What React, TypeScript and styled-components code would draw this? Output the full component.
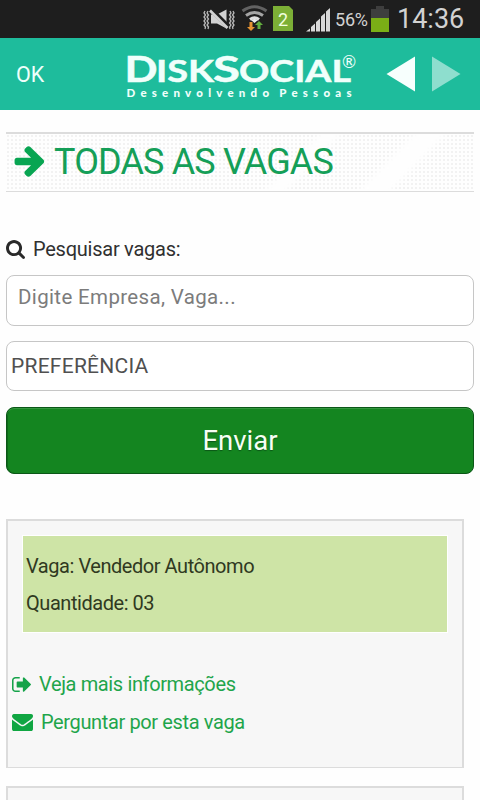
import React from 'react'
import styled, { createGlobalStyle } from "styled-components";

const GlobalStyle = createGlobalStyle`
    * {
        box-sizing: border-box;
    }

    body {
        margin: 0;
        background: #fefefe;
        font-family: Roboto, "Liberation Sans", sans-serif;
        overflow: hidden;
    }
`

const Screen = styled.div`
    width: 480px;
    height: 800px;
    overflow: hidden;
    background: #fefefe;
`

const StatusBar = styled.div`
    display: flex;
    align-items: center;
    height: 38px;
    padding-left: 203px;
    background: #1e1e1e;
    color: #d2d2d2;
`

const Percent = styled.span`
    width: 36px;
    margin-left: 5px;
    font-size: 18px;
    letter-spacing: -0.2px;
    white-space: nowrap;
`

const Clock = styled.span`
    margin-left: 7px;
    font-size: 27px;
    line-height: 38px;
    letter-spacing: 0;
`

const Header = styled.header`
    display: flex;
    align-items: center;
    height: 72px;
    padding-left: 16px;
    background: #1ebc9c;
    color: #effffb;
`

const OkLabel = styled.span`
    width: 108px;
    font-size: 21.5px;
`

const Arrows = styled.svg`
    margin-left: 26px;
`

const Content = styled.main`
    padding: 22px 6px 0;
`

const TitleBar = styled.div`
    display: flex;
    align-items: center;
    height: 60px;
    padding: 0 0 2px 6px;
    border-top: 2px solid #dcdcdc;
    border-bottom: 1px solid #dcdcdc;
    background:
        linear-gradient(134deg, transparent 59%, #fefefe 61%, #fefefe 63%, transparent 65%),
        linear-gradient(134deg, transparent 77%, #fefefe 79%, #fefefe 83%, transparent 85%),
        radial-gradient(circle, #f2f2f2 0.8px, transparent 1.3px) 0 0 / 4px 4px,
        #fefefe;
`

const Title = styled.h1`
    margin: 0 0 0 6px;
    font-size: 36px;
    font-weight: 400;
    line-height: 56px;
    letter-spacing: -0.85px;
    color: #159f58;
`

const SearchLabel = styled.label`
    display: flex;
    align-items: center;
    height: 28px;
    margin-top: 43px;
    gap: 8px;
    font-size: 20px;
    letter-spacing: -0.25px;
    color: #303030;
`

const Field = styled.div<{ $select?: boolean }>`
    height: ${(props) => (props.$select ? "50px" : "51px")};
    margin-top: ${(props) => (props.$select ? "15px" : "12px")};
    padding-left: ${(props) => (props.$select ? "4px" : "11px")};
    border: 1px solid #c6c6c6;
    border-radius: 8px;
    background: #fff;
    color: ${(props) => (props.$select ? "#505050" : "#7c7c7c")};
    font-size: ${(props) => (props.$select ? "21px" : "20.5px")};
    line-height: ${(props) => (props.$select ? "49px" : "43px")};
    letter-spacing: ${(props) => (props.$select ? "0.25px" : "0.35px")};
`

const SubmitButton = styled.button`
    display: block;
    width: 100%;
    height: 67px;
    margin-top: 16px;
    padding: 0;
    border: 1px solid #0b5717;
    border-radius: 8px;
    background: #148520;
    box-shadow: inset 0 1px 0 #35963f, inset 1px 0 0 #0e6a1a;
    color: #f6fff4;
    font-family: inherit;
    font-size: 27.5px;
    text-shadow: 0 1px 1px #0b5717;
`

const Card = styled.section<{ $first?: boolean }>`
    width: 458px;
    height: 249px;
    margin-top: ${(props) => (props.$first ? "45px" : "18px")};
    padding-top: 14px;
    border: 2px solid #dcdcdc;
    border-bottom-width: 1px;
    background: #f7f7f7;
`

const Summary = styled.div`
    width: 426px;
    height: 98px;
    margin-left: 14px;
    padding: 12px 3px 0;
    border: 1px solid #fff;
    background: #cee4a6;
    font-size: 20px;
    line-height: 37px;
    letter-spacing: -0.45px;
    color: #30391f;
`

const Links = styled.nav`
    margin-top: 32px;
    padding-left: 4px;
`

const JobLink = styled.a`
    display: flex;
    align-items: center;
    height: 38px;
    gap: 8px;
    font-size: 20px;
    letter-spacing: -0.37px;
    color: #1fa54b;
`

const ARROW_RIGHT = "M1600 960q0 54-37 91l-651 651q-39 37-91 37-51 0-90-37l-75-75q-38-38-38-91t38-91l293-293h-704q-52 0-84.500-37.500t-32.500-90.500v-128q0-53 32.500-90.500t84.500-37.500h704l-293-294q-38-36-38-90t38-90l75-75q38-38 90-38 53 0 91 38l651 651q37 35 37 90z"
const SEARCH = "M1216 832q0-185-131.500-316.500t-316.500-131.500-316.500 131.500-131.500 316.500 131.500 316.500 316.500 131.500 316.500-131.500 131.500-316.500zm512 832q0 52-38 90t-90 38q-54 0-90-38l-343-342q-179 124-399 124-143 0-273.500-55.500t-225-150-150-225-55.500-273.500 55.500-273.500 150-225 225-150 273.500-55.500 273.500 55.500 225 150 150 225 55.500 273.500q0 220-124 399l343 343q37 37 37 90z"
const SIGN_OUT = "M704 1440q0 4 1 20t.5 26.500-3 23.500-10 19.500-20.500 6.500h-320q-119 0-203.500-84.500t-84.500-203.500v-704q0-119 84.500-203.500t203.500-84.500h320q13 0 22.500 9.500t9.500 22.500q0 4 1 20t.5 26.500-3 23.500-10 19.500-20.500 6.500h-320q-66 0-113 47t-47 113v704q0 66 47 113t113 47h312l11.500 1 11.500 3 8 5.500 7 9 2 13.500zm928-544q0 26-19 45l-544 544q-19 19-45 19t-45-19-19-45v-288h-448q-26 0-45-19t-19-45v-384q0-26 19-45t45-19h448v-288q0-26 19-45t45-19 45 19l544 544q19 19 19 45z"
const ENVELOPE = "M1792 710v794q0 66-47 113t-113 47h-1472q-66 0-113-47t-47-113v-794q44 49 101 87 362 246 497 345 57 42 92.500 65.500t94.500 48 110 24.500h2q51 0 110-24.500t94.500-48 92.500-65.500q170-123 498-345 57-39 100-87zm0-294q0 79-49 151t-122 123q-376 261-468 325-10 7-42.500 31t-54 38.500-52 32.500-57.500 27-50 9h-2q-23 0-50-9t-57.500-27-52-32.500-54-38.500-42.500-31q-91-64-262-182.500t-205-142.500q-62-42-117-115.500t-55-136.500q0-78 41.500-130t118.500-52h1472q65 0 112.500 47t47.500 113z"

interface IconProps {
  path: string
  width: number
  height: number
  viewBox: string
  color: string
}

function Icon({ path, width, height, viewBox, color }: IconProps) {
  return (
    <svg width={width} height={height} viewBox={viewBox} preserveAspectRatio="none" fill={color}>
      <path d={path} />
    </svg>
  )
}

function StatusIcons() {
  return (
    <svg width="127" height="38" viewBox="203 0 127 38">
      {/* vibrate */}
      <g fill="none" stroke="#b8b8b8" strokeWidth="1.3">
        <path d="M205 11l-1 2 1.500 2-1.500 2 1.500 2-1.500 2 1.500 2-1.500 2 1.500 2-.5 2M208 11l-1 2 1.500 2-1.500 2 1.500 2-1.500 2 1.500 2-1.500 2 1.500 2-.5 2" />
        <path d="M230 11l1 2-1.500 2 1.500 2-1.500 2 1.500 2-1.500 2 1.500 2-1.500 2 .5 2M233 11l1 2-1.500 2 1.500 2-1.500 2 1.500 2-1.500 2 1.500 2-1.500 2 .5 2" />
      </g>
      <path d="M211 14.500h6l9.500-5v19l-9.500-5h-6z" fill="#d2d2d2" />
      <path d="M210 8.500l18 18" stroke="#1e1e1e" strokeWidth="5" />
      <path d="M210 10.500l17.500 17.500" stroke="#d2d2d2" strokeWidth="2.600" />
      {/* wifi */}
      <g fill="none" strokeWidth="3">
        <path d="M242.500 11q12-8.500 24 0" stroke="#626262" />
        <path d="M246 15.500q8.500-6 17 0" stroke="#a5a5a5" />
        <path d="M250 19.500q4.500-3.500 9 0" stroke="#dedede" />
      </g>
      <path d="M251 20q3.500-2 7 0l-3.500 3z" fill="#eee" />
      <path d="M249.500 22h3v5h2.500l-4 4-4-4h2.500z" fill="#e69332" />
      <path d="M257.500 29v-4h-2.500l4-4 4 4h-2.500v4z" fill="#63ae3e" />
      {/* sim card */}
      <path d="M273 6h16l4 4v21h-20z" fill="#7caf36" />
      <text x="283" y="25.500" fill="#f2ffe0" fontFamily="Roboto" fontSize="18" textAnchor="middle">2</text>
      {/* signal */}
      <path d="M306 31.500l4-3v3zM311 27l4-3.500v8h-4zM316 22l4-3.500v13h-4zM321 16.500l4-3.500v18.500h-4zM326 11.500l4-3.500v23.500h-4z" fill="#d8d8d8" />
    </svg>
  )
}

function Logo() {
  return (
    <svg width="232" height="72" viewBox="124 38 232 72" fill="#f0fffb" fontFamily="Lato, sans-serif" fontWeight="700">
      <g stroke="#f0fffb" strokeWidth="0.5">
        <text x="124.500" y="81.500" fontSize="35.500" textLength="33" lengthAdjust="spacingAndGlyphs">D</text>
        <text x="156" y="81.500" fontSize="31" textLength="58" lengthAdjust="spacingAndGlyphs">ISK</text>
        <text x="213" y="81.500" fontSize="35.500" textLength="27" lengthAdjust="spacingAndGlyphs">S</text>
        <text x="239" y="81.500" fontSize="31" textLength="112" lengthAdjust="spacingAndGlyphs">OCIAL</text>
      </g>
      <text x="342" y="68" fontSize="17" fontWeight="400">®</text>
      <text x="126.500" y="97" fontSize="11.500" fontWeight="900" wordSpacing="-3" textLength="225">Desenvolvendo Pessoas</text>
    </svg>
  )
}

export default function App(): React.ReactElement {
  return (
    <Screen>
      <GlobalStyle />
      <StatusBar>
        <StatusIcons />
        <Percent>56%</Percent>
        <svg width="19" height="26" viewBox="0 0 19 26">
          <path d="M5 0h8v3h5v9H0V3h5z" fill="#3e3e3e" />
          <path d="M0 12h18v14H0z" fill="#7aaf16" />
        </svg>
        <Clock>14:36</Clock>
      </StatusBar>
      <Header>
        <OkLabel>OK</OkLabel>
        <Logo />
        <Arrows width="80" height="36" viewBox="382 56 80 36">
          <path d="M386.500 74L415 56.500v35z" fill="#f7fffd" />
          <path d="M460.500 74L432 56.500v35z" fill="#8edece" />
        </Arrows>
      </Header>
      <Content>
        <TitleBar>
          <Icon path={ARROW_RIGHT} width={36} height={35} viewBox="0 60 1792 1792" color="#08a552" />
          <Title>TODAS AS VAGAS</Title>
        </TitleBar>
        <SearchLabel>
          <Icon path={SEARCH} width={19} height={19} viewBox="64 128 1664 1664" color="#292929" />
          Pesquisar vagas:
        </SearchLabel>
        <Field>Digite Empresa, Vaga...</Field>
        <Field $select>PREFERÊNCIA</Field>
        <SubmitButton>Enviar</SubmitButton>
        <Card $first>
          <Summary>
            <div>Vaga: Vendedor Autônomo</div>
            <div>Quantidade: 03</div>
          </Summary>
          <Links>
            <JobLink>
              <Icon path={SIGN_OUT} width={19} height={15} viewBox="64 256 1568 1280" color="#16a34a" />
              Veja mais informações
            </JobLink>
            <JobLink>
              <Icon path={ENVELOPE} width={21} height={17} viewBox="0 256 1792 1408" color="#10a642" />
              Perguntar por esta vaga
            </JobLink>
          </Links>
        </Card>
        <Card />
      </Content>
    </Screen>
  )
}
